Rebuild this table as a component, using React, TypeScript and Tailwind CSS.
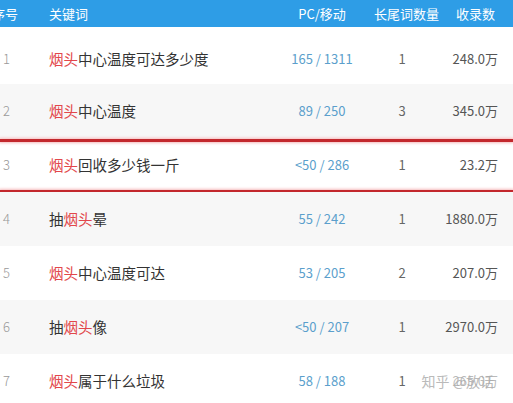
import React from 'react'

interface Row {
  id: number
  pre?: string
  post: string
  pc: string
  longTail: number
  count: string
}

const rows: Row[] = [
  { id: 1, post: '中心温度可达多少度', pc: '165 / 1311', longTail: 1, count: '248.0万' },
  { id: 2, post: '中心温度', pc: '89 / 250', longTail: 3, count: '345.0万' },
  { id: 3, post: '回收多少钱一斤', pc: '<50 / 286', longTail: 1, count: '23.2万' },
  { id: 4, pre: '抽', post: '晕', pc: '55 / 242', longTail: 1, count: '1880.0万' },
  { id: 5, post: '中心温度可达', pc: '53 / 205', longTail: 2, count: '207.0万' },
  { id: 6, pre: '抽', post: '像', pc: '<50 / 207', longTail: 1, count: '2970.0万' },
  { id: 7, post: '属于什么垃圾', pc: '58 / 188', longTail: 1, count: '265.0万' },
]

const font = { fontFamily: '"Noto Sans CJK SC", "Noto Sans", sans-serif' }
const cols = 'grid grid-cols-[49px_221px_104px_56px_70px] items-center'

const App: React.FC = () => {
  return (
    <div className="w-[513px] h-[403px] overflow-hidden bg-white" style={font}>
      {/* Header */}
      <div className={`${cols} h-[27px] bg-[#2e9de6] text-white text-[13px]`}>
        <span className="-ml-[8px] whitespace-nowrap">序号</span>
        <span>关键词</span>
        <span className="text-center">PC/移动</span>
        <span className="text-center whitespace-nowrap">长尾词数量</span>
        <span className="text-right pr-[5px]">收录数</span>
      </div>

      {rows.map((r, i) => {
        const marked = r.id === 3
        return (
          <div
            key={r.id}
            className={`${cols} relative ${i === 0 ? 'h-[57px] pt-[6px]' : 'h-[54px]'} ${i % 2 === 1 ? 'bg-[#f7f7f7]' : 'bg-white'}`}
          >
            {marked && (
              <>
                <div className="absolute left-0 right-0 top-[1px] h-[3px] bg-[#c3282d] shadow-[0_0_3px_1px_#f5b8ba]" />
                <div className="absolute left-0 right-0 top-[52px] h-[3px] bg-[#c3282d] shadow-[0_0_3px_1px_#f5b8ba]" />
              </>
            )}
            <span className="pl-[3px] text-[13px] font-light text-[#999]">{r.id}</span>
            <span className="text-[14.5px] text-[#333] whitespace-nowrap">
              {r.pre}
              <span className="text-[#e2474b]">烟头</span>
              {r.post}
            </span>
            <span className="text-center text-[13px] text-[#5b9fcc] whitespace-nowrap">{r.pc}</span>
            <span className="text-center text-[13px] text-[#666]">{r.longTail}</span>
            <span className="relative text-right text-[13px] text-[#555] pr-[2px]">
              <span className={r.id === 7 ? 'opacity-40' : ''}>{r.count}</span>
              {r.id === 7 && (
                <span className="absolute right-[6px] top-1/2 -translate-y-1/2 whitespace-nowrap text-[14px] text-[#aaa] opacity-80">
                  知乎 @放话
                </span>
              )}
            </span>
          </div>
        )
      })}
    </div>
  )
}

export default App
